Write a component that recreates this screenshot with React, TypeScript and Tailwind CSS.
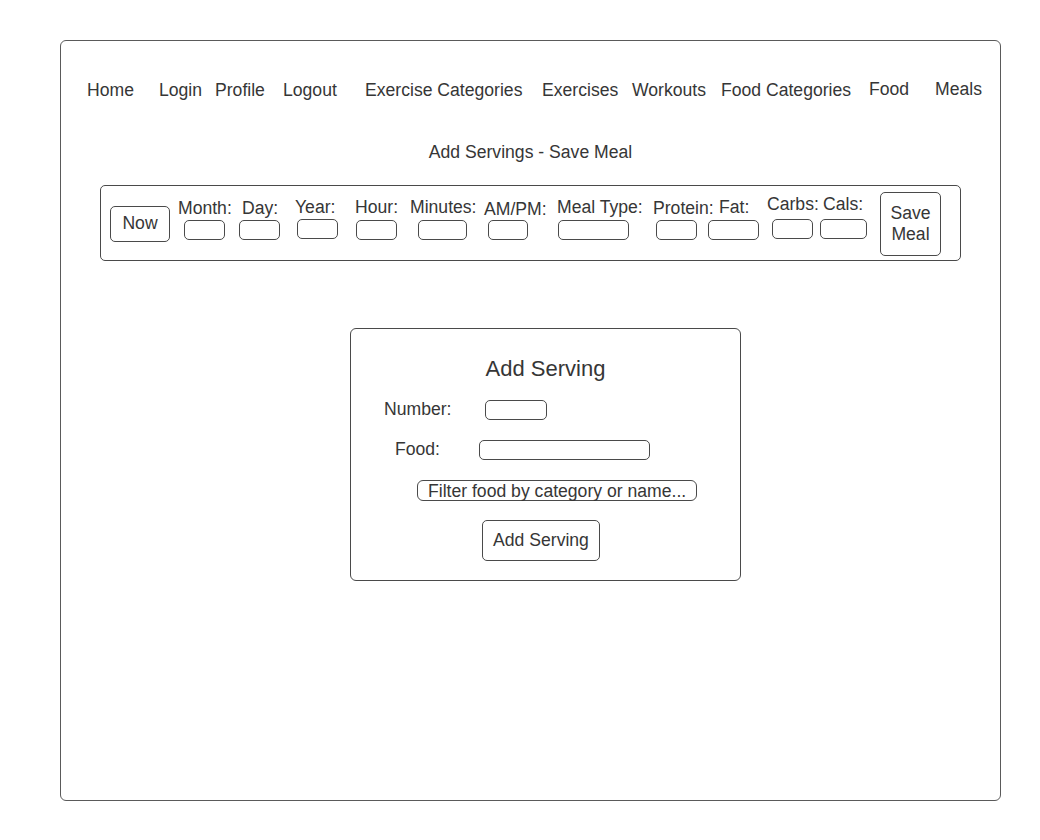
const navItems = [
  { label: 'Home', w: 'w-[72px]' },
  { label: 'Login', w: 'w-[56px]' },
  { label: 'Profile', w: 'w-[68px]' },
  { label: 'Logout', w: 'w-[82px]' },
  { label: 'Exercise Categories', w: 'w-[177px]' },
  { label: 'Exercises', w: 'w-[90px]' },
  { label: 'Workouts', w: 'w-[89px]' },
  { label: 'Food Categories', w: 'w-[148px]' },
  { label: 'Food', w: 'w-[66px] -mt-[2px]' },
  { label: 'Meals', w: '-mt-[2px]' },
];

// label widths = distance to the next label; offsets follow the sketch
const fieldLabels = [
  { label: 'Month:', cls: 'w-[64px] mt-[1px]' },
  { label: 'Day:', cls: 'w-[53px] mt-[1px]' },
  { label: 'Year:', cls: 'w-[60px]' },
  { label: 'Hour:', cls: 'w-[55px]' },
  { label: 'Minutes:', cls: 'w-[74px]' },
  { label: 'AM/PM:', cls: 'w-[73px] mt-[2px]' },
  { label: 'Meal Type:', cls: 'w-[96px]' },
  { label: 'Protein:', cls: 'w-[66px] mt-[1px]' },
  { label: 'Fat:', cls: 'w-[48px]' },
  { label: 'Carbs:', cls: 'w-[56px] -mt-[3px]' },
  { label: 'Cals:', cls: '-mt-[3px]' },
];

const fieldInputs = [
  'ml-[6px] w-[41px]',
  'ml-[14px] w-[41px]',
  'ml-[17px] w-[41px] -mt-[1px]',
  'ml-[18px] w-[41px]',
  'ml-[21px] w-[49px]',
  'ml-[21px] w-[40px]',
  'ml-[30px] w-[71px]',
  'ml-[27px] w-[41px]',
  'ml-[11px] w-[51px]',
  'ml-[13px] w-[41px] -mt-[1px]',
  'ml-[7px] w-[47px] -mt-[1px]',
];

function Box({ className }: { className: string }) {
  return <div className={`h-[20px] rounded-[5px] border border-[#4a4a4a] ${className}`} />;
}

export default function App() {
  return (
    <div
      className="min-h-screen bg-white pl-[60px] pt-[40px] text-[17.6px] leading-[20px] text-[#363636]"
      style={{ fontFamily: '"Liberation Sans", Arial, sans-serif' }}
    >
      <div className="h-[761px] w-[941px] rounded-[6px] border border-[#5a5a5a]">
        {/* Nav */}
        <nav className="ml-[26px] mt-[39px] flex h-[20px] items-center whitespace-nowrap">
          {navItems.map((item) => (
            <span key={item.label} className={item.w}>
              {item.label}
            </span>
          ))}
        </nav>

        <h1 className="mt-[42px] text-center">Add Servings - Save Meal</h1>

        {/* Meal toolbar */}
        <div className="mx-auto mt-[23px] flex h-[76px] w-[861px] rounded-[5px] border border-[#4a4a4a]">
          <button className="ml-[9px] mt-[20px] h-[36px] w-[60px] rounded-[5px] border border-[#4a4a4a] pb-[3px]">
            Now
          </button>

          <div className="ml-[8px] mt-[11px] flex flex-col">
            <div className="flex h-[20px] items-start whitespace-nowrap">
              {fieldLabels.map((f) => (
                <span key={f.label} className={f.cls}>
                  {f.label}
                </span>
              ))}
            </div>
            <div className="mt-[3px] flex items-start">
              {fieldInputs.map((cls, i) => (
                <Box key={i} className={cls} />
              ))}
            </div>
          </div>

          <button className="ml-auto mr-[19px] mt-[6px] flex h-[64px] w-[61px] flex-col items-center justify-center gap-[1px] rounded-[5px] border border-[#4a4a4a] pb-[2px] leading-[20px]">
            <span>Save</span>
            <span>Meal</span>
          </button>
        </div>

        {/* Add serving form */}
        <div className="ml-[289px] mt-[67px] h-[253px] w-[391px] rounded-[6px] border border-[#4a4a4a]">
          <h2 className="mt-[27px] text-center text-[22px] leading-[26px]">Add Serving</h2>

          <div className="mt-[18px] flex items-center">
            <span className="ml-[33px] w-[101px] -translate-y-[1px]">Number:</span>
            <Box className="w-[62px]" />
          </div>

          <div className="mt-[20px] flex items-center">
            <span className="ml-[44px] w-[84px] -translate-y-[1px]">Food:</span>
            <Box className="w-[171px]" />
          </div>

          <div className="ml-[66px] mt-[20px] flex h-[21px] w-[280px] items-center whitespace-nowrap rounded-[6px] border border-[#4a4a4a] pl-[10px]">
            Filter food by category or name...
          </div>

          <button className="ml-[131px] mt-[19px] h-[41px] w-[118px] rounded-[5px] border border-[#4a4a4a] pb-[2px]">
            Add Serving
          </button>
        </div>
      </div>
    </div>
  );
}
